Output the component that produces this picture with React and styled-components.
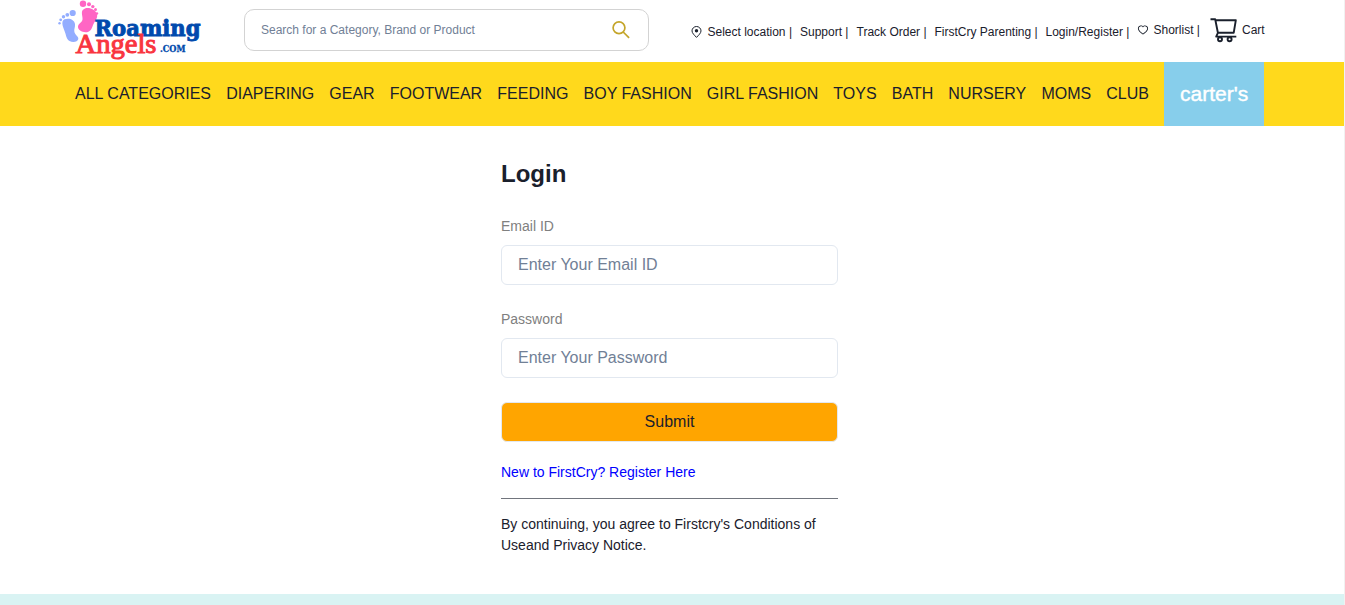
import React from 'react';
import styled, { createGlobalStyle } from 'styled-components';
import { AiOutlineHeart } from 'react-icons/ai';

const GlobalStyle = createGlobalStyle`
  *, *::before, *::after { box-sizing: border-box; }
  body {
    margin: 0;
    background: #fff;
    color: #1a202c;
    font-family: "Liberation Sans", Arial, Helvetica, sans-serif;
    font-size: 16px;
    line-height: 24px;
    overflow: hidden;
  }
`;

const Page = styled.div`
  display: flex;
  flex-direction: column;
  height: 605px;
  border-right: 1px solid #f1f1f1;
`;

const Header = styled.header`
  display: flex;
  align-items: flex-start;
  height: 62px;
  padding-left: 56px;
`;

const Logo = styled.svg`
  flex: none;
  display: block;
  width: 150px;
  height: 62px;
  overflow: visible;
`;

const SearchBox = styled.label`
  flex: none;
  display: flex;
  align-items: center;
  justify-content: space-between;
  width: 405px;
  height: 42px;
  margin: 9px 0 0 38px;
  padding: 0 17px 0 16px;
  border: 1px solid #d3d3d3;
  border-radius: 10px;
  color: #c4a52a;
`;

const SearchInput = styled.input`
  width: 300px;
  padding: 0;
  border: 0;
  outline: 0;
  background: none;
  font: 12px "Liberation Sans", Arial, sans-serif;
  &::placeholder { color: #718096; opacity: 1; }
`;

const Links = styled.div`
  display: flex;
  align-items: flex-start;
  margin-left: 42px;
  font-size: 12px;
  line-height: 18px;
  white-space: nowrap;
`;

const LinkItem = styled.span`
  flex: none;
  display: flex;
  align-items: center;
  height: 18px;
  width: ${(p) => p.$width}px;
  margin-top: ${(p) => p.$top || 23}px;
  gap: ${(p) => p.$gap || 0}px;
  svg { flex: none; }
`;

const Nav = styled.nav`
  flex: none;
  display: flex;
  align-items: center;
  height: 64px;
  padding-left: 75px;
  background: #ffd91c;
`;

const NavItem = styled.span`
  flex: none;
  margin-right: 15.12px;
  padding-bottom: 1px;
  white-space: nowrap;
`;

const Brand = styled.span`
  flex: none;
  display: flex;
  align-items: center;
  justify-content: center;
  width: 100px;
  height: 64px;
  background: #87ceeb;
  color: #fff;
  font-size: 21px;
  -webkit-text-stroke: 0.4px #fff;
`;

const Form = styled.form`
  display: flex;
  flex-direction: column;
  width: 337px;
  margin: 33px 0 0 501px;
  flex: 1;
`;

const Title = styled.h1`
  margin: 0 0 27px;
  font-size: 24px;
  line-height: 30px;
`;

const Label = styled.label`
  margin-bottom: 8px;
  color: #808080;
  font-size: 14px;
  line-height: 21px;
`;

const Field = styled.input`
  flex: none;
  width: 100%;
  height: 40px;
  margin-bottom: 24px;
  padding: 0 16px;
  border: 1px solid #e2e8f0;
  border-radius: 6px;
  outline: 0;
  font: 16px "Liberation Sans", Arial, sans-serif;
  &::placeholder { color: #718096; opacity: 1; }
`;

const Submit = styled.button`
  flex: none;
  height: 40px;
  padding: 0;
  border: 1px solid #e2e8f0;
  border-radius: 6px;
  background: #ffa500;
  color: #1a202c;
  font: 16px "Liberation Sans", Arial, sans-serif;
`;

const Register = styled.a`
  margin-top: 20px;
  color: #0000ff;
  font-size: 14px;
  line-height: 21px;
`;

const Divider = styled.div`
  flex: none;
  height: 1px;
  margin: 15px 0;
  background: #71757d;
`;

const Terms = styled.p`
  margin: 0;
  font-size: 14px;
  line-height: 21px;
`;

const Footer = styled.footer`
  flex: none;
  height: 11px;
  background: #d9f3f3;
`;

const categories = [
  'ALL CATEGORIES', 'DIAPERING', 'GEAR', 'FOOTWEAR', 'FEEDING', 'BOY FASHION',
  'GIRL FASHION', 'TOYS', 'BATH', 'NURSERY', 'MOMS', 'CLUB',
];

function BrandLogo() {
  return (
    <Logo viewBox="56 0 150 62">
      <g fill="#93adff">
        <path d="M64.500 19.300c4.500-1.800 10 .3 10.500 4.700.4 3.500-1.300 5-.6 8 .7 3.200 4.400 4.200 3.900 7-.6 3-5.500 4-8.800 2-3.200-2-3.300-5.600-4.600-9.100-1.400-3.700-4.700-10.500-.4-12.600z" />
        <circle cx="72.700" cy="13" r="3.100" /><circle cx="67.300" cy="14.800" r="1.900" />
        <circle cx="63.500" cy="16.800" r="1.700" /><circle cx="60.700" cy="19.800" r="1.400" />
        <circle cx="59.500" cy="23.300" r="1.200" />
      </g>
      <g fill="#ff66c4">
        <path d="M85 8.500c4.500-1.500 10.500 1.200 11.900 5.500 1.200 3.900-1.700 6.400-3.400 10-1.600 3.500-2.200 7.500-6.500 8.200-4.600.6-9.300-1.800-9-5.600.3-3.300 4.100-4 4.500-7.100.5-3.800-2.900-9 2.500-11z" />
        <circle cx="83" cy="3.700" r="3.200" /><circle cx="89" cy="4.300" r="2" />
        <circle cx="92.800" cy="6.600" r="1.700" /><circle cx="95.500" cy="9.600" r="1.500" />
        <circle cx="97" cy="13.500" r="1.200" />
      </g>
      <text x="94.500" y="36" textLength="106" lengthAdjust="spacingAndGlyphs" fontFamily="DejaVu Serif, serif" fontWeight="700" fontSize="22.500" fill="#004aad" stroke="#004aad" strokeWidth=".9">Roaming</text>
      <text x="75.500" y="53" textLength="81" lengthAdjust="spacingAndGlyphs" fontFamily="Liberation Serif, serif" fontSize="28" fill="#f93540" stroke="#f93540" strokeWidth="1">Angels</text>
      <text x="160" y="51.500" textLength="25.500" lengthAdjust="spacingAndGlyphs" fontFamily="DejaVu Serif, serif" fontWeight="700" fontSize="8.500" fill="#004aad" stroke="#004aad" strokeWidth=".3">.COM</text>
    </Logo>
  );
}

function SearchIcon() {
  return (
    <svg width="20" height="20" viewBox="0 0 20 20" fill="none" stroke="currentColor" strokeWidth="1.700">
      <circle cx="8" cy="7.800" r="5.900" />
      <path d="M12.200 12l5.900 5.900" />
    </svg>
  );
}

function PinIcon() {
  return (
    <svg width="11" height="12" viewBox="0 0 11 12" fill="none" stroke="currentColor">
      <path d="M5.500 11.400C3.500 9.200 1 7.200 1 4.900a4.500 4.400 0 0 1 9 0c0 2.300-2.500 4.300-4.500 6.500z" />
      <circle cx="5.500" cy="4.700" r="1.700" fill="currentColor" stroke="none" />
    </svg>
  );
}

function CartIcon() {
  return (
    <svg width="28" height="26" viewBox="0 0 28 26" fill="none" stroke="currentColor" strokeWidth="1.900" strokeLinejoin="round">
      <path d="M.5 2.200h4.700l2.700 13.600h15.800l2.100-12.500H5.500M7.900 15.800L6.200 19.600H26.300" />
      <circle cx="10" cy="22.300" r="2" />
      <circle cx="19.600" cy="22.300" r="2" />
    </svg>
  );
}

export default function App() {
  return (
    <>
      <GlobalStyle />
      <Page>
        <Header>
          <BrandLogo />
          <SearchBox>
            <SearchInput placeholder="Search for a Category, Brand or Product" />
            <SearchIcon />
          </SearchBox>
          <Links>
            <LinkItem $width={109} $gap={5.500}><PinIcon />Select location |</LinkItem>
            <LinkItem $width={56.500}>Support |</LinkItem>
            <LinkItem $width={78}>Track Order |</LinkItem>
            <LinkItem $width={111}>FirstCry Parenting |</LinkItem>
            <LinkItem $width={91.500}>Login/Register |</LinkItem>
            <LinkItem $width={73} $top={21} $gap={4.500}><AiOutlineHeart size={12} />Shorlist |</LinkItem>
            <LinkItem $width={60} $top={21} $gap={4}><CartIcon />Cart</LinkItem>
          </Links>
        </Header>
        <Nav>
          {categories.map((name) => <NavItem key={name}>{name}</NavItem>)}
          <Brand>carter's</Brand>
        </Nav>
        <Form>
          <Title>Login</Title>
          <Label htmlFor="email">Email ID</Label>
          <Field id="email" placeholder="Enter Your Email ID" />
          <Label htmlFor="password">Password</Label>
          <Field id="password" type="password" placeholder="Enter Your Password" />
          <Submit type="button">Submit</Submit>
          <Register>New to FirstCry? Register Here</Register>
          <Divider />
          <Terms>By continuing, you agree to Firstcry's Conditions of Useand Privacy Notice.</Terms>
        </Form>
        <Footer />
      </Page>
    </>
  );
}
